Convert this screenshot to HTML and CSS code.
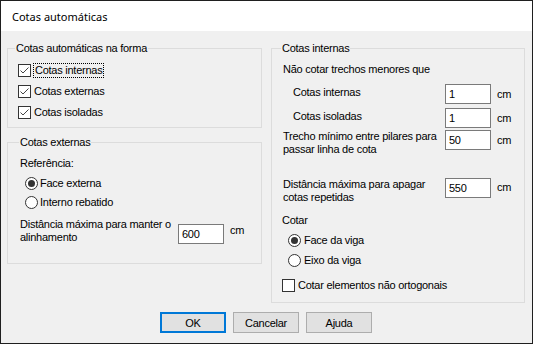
FILE: index.html
```html
<!DOCTYPE html>
<html lang="pt">
<head>
  <meta charset="UTF-8" />
  <title>Cotas automáticas</title>
  <link rel="stylesheet" href="styles.css">
</head>
<body>
  <div class="window">
    <div class="titlebar">Cotas automáticas</div>

    <div class="client">
      <div class="columns">
        <div class="col-left">
          <fieldset class="group group-forma">
            <legend>Cotas automáticas na forma</legend>
            <label class="check-row">
              <span class="box"><svg width="11" height="11" viewBox="0 0 11 11"><polyline points="1.5,5.5 4,8 9.5,2.5" fill="none" stroke="#444" stroke-width="1"/></svg></span>
              <span class="focus">Cotas internas</span>
            </label>
            <label class="check-row">
              <span class="box"><svg width="11" height="11" viewBox="0 0 11 11"><polyline points="1.5,5.5 4,8 9.5,2.5" fill="none" stroke="#444" stroke-width="1"/></svg></span>
              <span class="check-text">Cotas externas</span>
            </label>
            <label class="check-row">
              <span class="box"><svg width="11" height="11" viewBox="0 0 11 11"><polyline points="1.5,5.5 4,8 9.5,2.5" fill="none" stroke="#444" stroke-width="1"/></svg></span>
              <span class="check-text">Cotas isoladas</span>
            </label>
          </fieldset>

          <fieldset class="group group-ext">
            <legend>Cotas externas</legend>
            <div class="plain ref-label">Referência:</div>
            <div class="radio-list ext-radios">
              <label class="radio-row"><span class="radio on"></span><span>Face externa</span></label>
              <label class="radio-row"><span class="radio"></span><span>Interno rebatido</span></label>
            </div>
            <div class="field-row align-row">
              <span class="field-label wide">Distância máxima para manter o<br>alinhamento</span>
              <span class="edit edit-600">600</span>
              <span class="unit">cm</span>
            </div>
          </fieldset>
        </div>

        <fieldset class="group group-int">
          <legend>Cotas internas</legend>
          <div class="plain min-label">Não cotar trechos menores que</div>

          <div class="field-row row-int">
            <span class="field-label indent">Cotas internas</span>
            <span class="edit">1</span>
            <span class="unit">cm</span>
          </div>
          <div class="field-row row-iso">
            <span class="field-label indent">Cotas isoladas</span>
            <span class="edit">1</span>
            <span class="unit">cm</span>
          </div>
          <div class="field-row row-trecho">
            <span class="field-label two">Trecho mínimo entre pilares para<br>passar linha de cota</span>
            <span class="edit">50</span>
            <span class="unit">cm</span>
          </div>
          <div class="field-row row-dist">
            <span class="field-label two">Distância máxima para apagar<br>cotas repetidas</span>
            <span class="edit">550</span>
            <span class="unit">cm</span>
          </div>

          <div class="plain cotar-label">Cotar</div>
          <div class="radio-list int-radios">
            <label class="radio-row"><span class="radio on"></span><span>Face da viga</span></label>
            <label class="radio-row"><span class="radio"></span><span>Eixo da viga</span></label>
          </div>

          <label class="check-row ortho">
            <span class="box"></span>
            <span class="check-text">Cotar elementos não ortogonais</span>
          </label>
        </fieldset>
      </div>

      <div class="buttons">
        <button class="btn btn-default">OK</button>
        <button class="btn">Cancelar</button>
        <button class="btn">Ajuda</button>
      </div>
    </div>
  </div>
</body>
</html>
```

FILE: styles.css
```css
* {
  box-sizing: border-box;
  margin: 0;
  padding: 0;
}

body {
  background-color: #f0f0f0;
  font-family: 'Liberation Sans', Arial, sans-serif;
  font-size: 11px;
  letter-spacing: -0.25px;
  line-height: 13px;
  color: #000;
}

.window {
  width: 533px;
  height: 344px;
  border: 1px solid #1f1f1f;
  background-color: #f0f0f0;
  display: flex;
  flex-direction: column;
}

.titlebar {
  height: 30px;
  background-color: #fff;
  padding-left: 11px;
  font-family: 'Segoe UI', 'Noto Sans', sans-serif;
  font-size: 11px;
  letter-spacing: 0;
  line-height: 31px;
}

.client {
  padding: 11px 7px 0 6px;
}

.columns {
  display: flex;
  gap: 9px;
}

.col-left {
  width: 255px;
  display: flex;
  flex-direction: column;
  gap: 8px;
}

/* group boxes */
.group {
  border: 1px solid #dcdcdc;
  padding: 0 0 0 7px;
  min-width: 0;
  display: flex;
  flex-direction: column;
}

.group legend {
  padding: 0 1px;
  line-height: 13px;
}

.group-forma { height: 86px; }
.group-ext { height: 128px; }
.group-ext legend { margin-left: 4px; }
.group-int { width: 254px; height: 261px; }
.group-int legend { margin-left: 2px; }

/* checkboxes */
.check-row {
  display: flex;
  align-items: center;
  height: 21px;
  margin-left: 3px;
}

.group-forma .check-row:first-of-type { margin-top: 5px; }

.box {
  width: 13px;
  height: 13px;
  border: 1px solid #333;
  background-color: #fff;
  display: flex;
  flex: none;
}

.check-text {
  margin-left: 3px;
}

.focus {
  margin-left: 2px;
  padding: 0 1px;
  border: 1px dotted #000;
  line-height: 13px;
}

.ortho {
  height: 13px;
  margin-top: 9px;
}

/* radios */
.radio-row {
  display: flex;
  align-items: center;
  height: 19px;
}

.radio {
  width: 13px;
  height: 13px;
  border: 1px solid #333;
  border-radius: 50%;
  background-color: #fff;
  margin-right: 2px;
  display: flex;
  align-items: center;
  justify-content: center;
  flex: none;
}

.radio.on::after {
  content: "";
  width: 7px;
  height: 7px;
  border-radius: 50%;
  background-color: #333;
}

.ext-radios {
  margin: 4px 0 0 10px;
}

.int-radios {
  margin: 3px 0 0 9px;
}

.int-radios .radio-row { height: 20px; }
.int-radios .radio { margin-right: 3px; }

/* plain labels */
.ref-label { margin: 8px 0 0 5px; }
.min-label { margin: 8px 0 0 4px; }
.cotar-label { margin: 10px 0 0 3px; }

/* edit rows */
.field-row {
  display: flex;
  align-items: flex-start;
}

.field-label {
  width: 166px;
  padding-left: 4px;
  white-space: nowrap;
}

.field-label.indent {
  padding-top: 2px;
  padding-left: 14px;
}

.field-label.wide {
  width: 163px;
  padding-left: 5px;
}

.edit {
  width: 46px;
  height: 20px;
  border: 1px solid #7a7a7a;
  background-color: #fff;
  padding: 3px 0 0 3px;
  flex: none;
}

.unit {
  margin-left: 6px;
  padding-top: 4px;
}

.row-int { margin-top: 8px; }
.row-iso { margin-top: 4px; }
.row-trecho { margin-top: 2px; height: 26px; }
.row-trecho .unit { padding-top: 4px; }
.row-dist { margin-top: 22px; height: 26px; }
.row-dist .unit { padding-top: 3px; }

.align-row { margin-top: 6px; }
.align-row .edit { margin-top: 6px; }
.align-row .unit { margin-top: 2px; }

/* buttons */
.buttons {
  display: flex;
  justify-content: center;
  gap: 7px;
  margin-top: 9px;
}

.btn {
  width: 66px;
  height: 21px;
  border: 1px solid #adadad;
  background-color: #e1e1e1;
  font-family: 'Liberation Sans', Arial, sans-serif;
  font-size: 11px;
  letter-spacing: -0.25px;
  color: #000;
}

.btn-default {
  border: 2px solid #0078d7;
}
```
